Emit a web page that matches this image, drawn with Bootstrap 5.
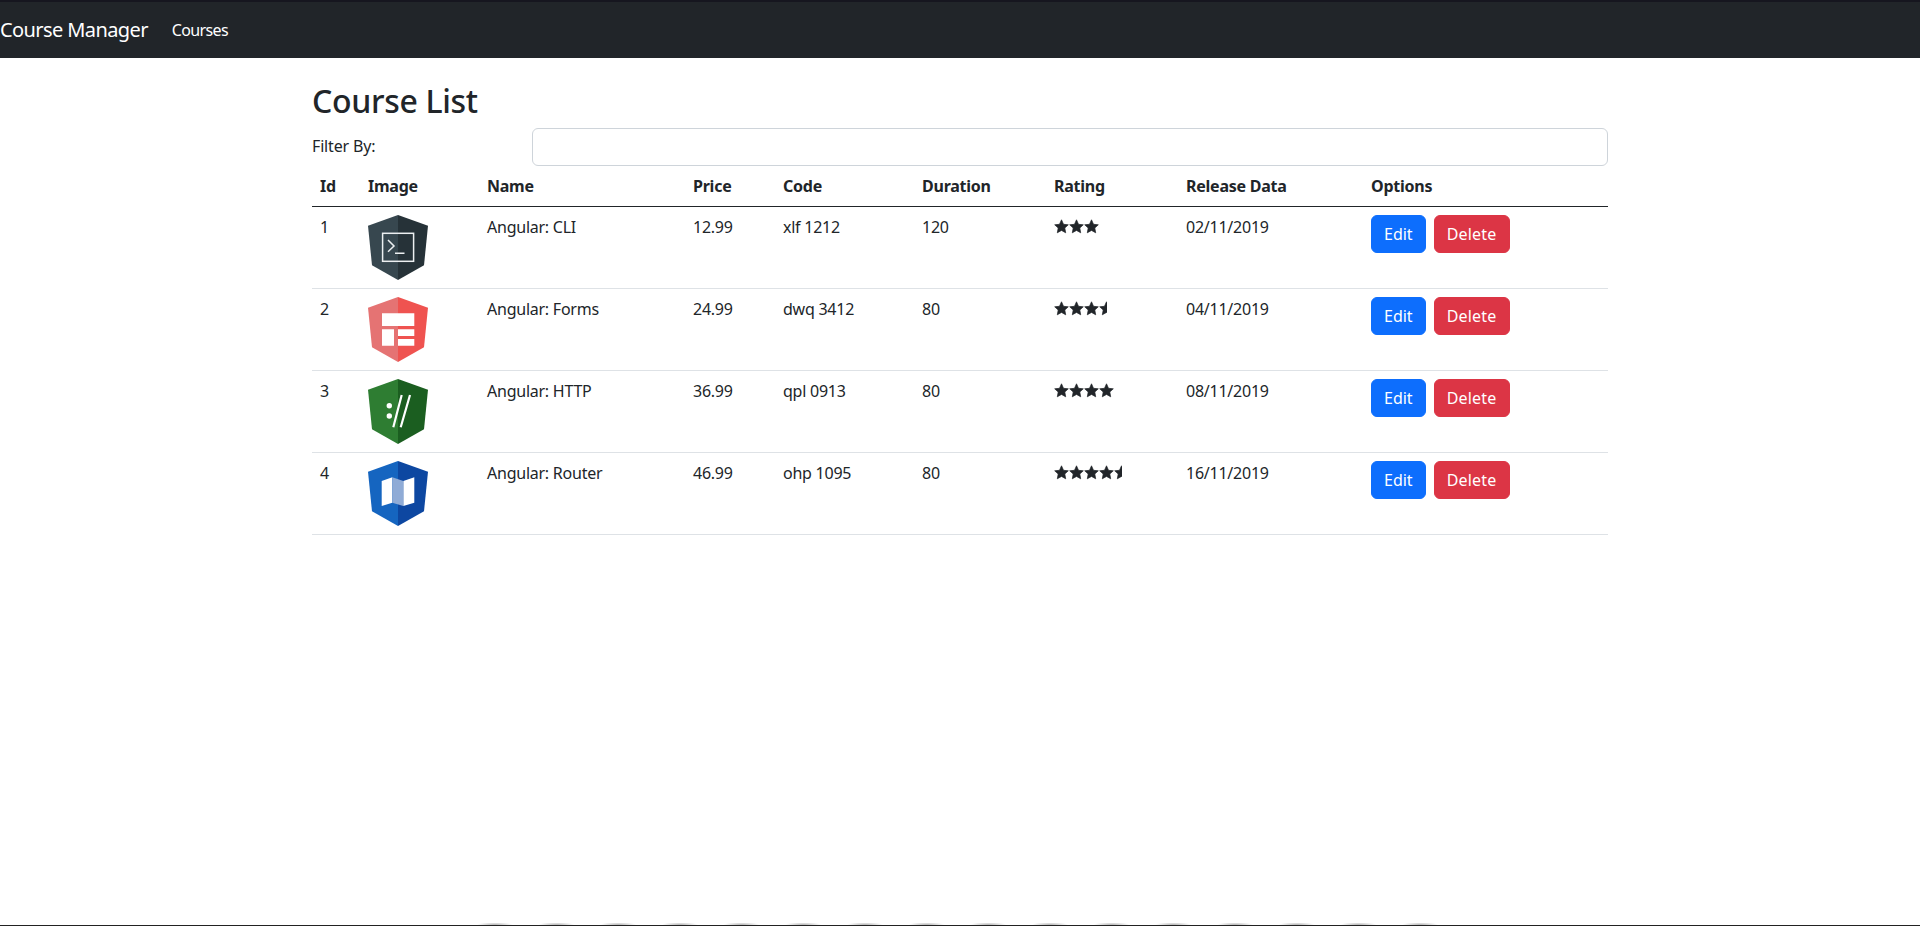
<!DOCTYPE html>
<html lang="en">
<head>
    <meta charset="UTF-8">
    <meta name="viewport" content="width=device-width, initial-scale=1.0">
    <title>Course Manager</title>
    <link href="https://cdn.jsdelivr.net/npm/bootstrap@5.3.0/dist/css/bootstrap.min.css" rel="stylesheet">
    <style>
        body {
            font-family: "Noto Sans", "Open Sans", sans-serif;
        }
        .top-strip {
            height: 2px;
            background: #16161f;
        }
        .app-bar {
            height: 56px;
            padding: 0;
        }
        .app-bar .navbar-brand {
            padding: 0;
            margin-right: 16px;
            font-size: 20px;
            letter-spacing: -0.03em;
        }
        .app-bar .nav-link {
            color: #fff;
            padding: 8px;
            letter-spacing: -0.04em;
        }
        .page-title {
            margin: 24px 0 8px;
            line-height: 38px;
            font-weight: 500;
            letter-spacing: -0.01em;
        }
        .filter-row {
            height: 38px;
        }
        .filter-row .form-control {
            border-color: #ced4da;
        }
        .filter-label {
            letter-spacing: -0.01em;
            padding-bottom: 2px;
        }
        .course-table {
            table-layout: fixed;
            margin: 0;
            letter-spacing: -0.015em;
        }
        .course-table th {
            vertical-align: middle;
        }
        .course-table thead th {
            border-bottom-color: #212529;
        }
        .course-table td {
            height: 82px;
        }
        .course-table .btn {
            letter-spacing: 0;
        }
        .course-table .btn-danger {
            letter-spacing: 0.2px;
        }
        .course-logo {
            display: block;
            width: 60px;
            height: 65px;
        }
        .stars-clip {
            display: block;
            height: 16px;
            margin-top: 4px;
            overflow: hidden;
        }
        .stars-clip svg {
            display: block;
            width: 75px;
            height: 16px;
        }
        .dock-glow {
            height: 2px;
            width: 990px;
            margin-left: 464px;
            background: radial-gradient(ellipse 18px 3px at center bottom, rgba(0, 0, 0, .3), transparent) 0 0 / 61.7px 100%;
        }
        .bottom-strip {
            height: 1px;
            background: #222;
        }
    </style>
</head>
<body class="d-flex flex-column min-vh-100">
    <div class="top-strip"></div>
    <nav class="navbar navbar-dark bg-dark app-bar">
        <div class="d-flex align-items-center">
            <a class="navbar-brand" href="#">Course Manager</a>
            <a class="nav-link" href="#">Courses</a>
        </div>
    </nav>

    <main class="container flex-grow-1">
        <h2 class="page-title">Course List</h2>
        <div class="row align-items-center filter-row">
            <div class="col-2 filter-label">Filter By:</div>
            <div class="col-10"><input type="text" class="form-control"></div>
        </div>
        <table class="table course-table">
            <colgroup id="cols"></colgroup>
            <thead>
                <tr>
                    <th>Id</th>
                    <th>Image</th>
                    <th>Name</th>
                    <th>Price</th>
                    <th>Code</th>
                    <th>Duration</th>
                    <th>Rating</th>
                    <th>Release Data</th>
                    <th>Options</th>
                </tr>
            </thead>
            <tbody id="rows"></tbody>
        </table>
    </main>

    <div class="dock-glow"></div>
    <div class="bottom-strip"></div>

    <script>
        const colWidths = [48, 119, 206, 90, 139, 132, 132, 185, 245];
        const logos = {
            cli: `<polygon points="30,0 0,10.7 4,50.3 30,65" fill="#37474f"/><polygon points="30,0 60,10.7 56,50.3 30,65" fill="#263238"/>
                  <rect x="14.6" y="18.3" width="31" height="28" fill="none" stroke="#eceff1" stroke-width="1.5"/>
                  <path d="M20 25l6 6-6 5.7M27 38.3h9.5" fill="none" stroke="#eceff1" stroke-width="1.5"/>`,
            forms: `<polygon points="30,0 0,10.7 4,50.3 30,65" fill="#e57373"/><polygon points="30,0 60,10.7 56,50.3 30,65" fill="#ef5350"/>
                  <path d="M14 16.3h32.3V29H14zM14 32.3h12v16.4H14zM30 32.3h16.3V39H30zM30 42h16.3v6.7H30z" fill="#fff"/>`,
            http: `<polygon points="30,0 0,10.7 4,50.3 30,65" fill="#2e7d32"/><polygon points="30,0 60,10.7 56,50.3 30,65" fill="#1b5e20"/>
                  <circle cx="21.3" cy="26.7" r="2.7" fill="#fff"/><circle cx="21.3" cy="37" r="2.7" fill="#fff"/>
                  <path d="M33.7 16l-8.4 32.3M42 16l-9.3 32.3" fill="none" stroke="#fff" stroke-width="2.2"/>`,
            router: `<polygon points="30,0 0,10.7 4,50.3 30,65" fill="#1565c0"/><polygon points="30,0 60,10.7 56,50.3 30,65" fill="#0d47a1"/>
                  <path d="M13.7 20l10.6-3.7v25.4L13.7 45zM35.3 20l11-3.7v25.4L35.3 45z" fill="#fff"/>
                  <path d="M24.3 16.3l11 3.7v25l-11-3.3z" fill="#8fabd6"/>`
        };
        const courses = [
            [1, "cli", "Angular: CLI", "12.99", "xlf 1212", 120, 3, "02/11/2019"],
            [2, "forms", "Angular: Forms", "24.99", "dwq 3412", 80, 3.5, "04/11/2019"],
            [3, "http", "Angular: HTTP", "36.99", "qpl 0913", 80, 4, "08/11/2019"],
            [4, "router", "Angular: Router", "46.99", "ohp 1095", 80, 4.5, "16/11/2019"]
        ];
        const star = x => `<polygon transform="translate(${x} 0)" points="7.5,.8 9.5,5.3 14.3,5.8 10.8,9 11.7,13.8 7.5,11.4 3.3,13.8 4.2,9 .7,5.8 5.5,5.3" fill="#212529" stroke="#212529" stroke-width=".7" stroke-linejoin="round"/>`;
        const stars = [0, 15, 30, 45, 60].map(star).join("");

        document.getElementById("cols").innerHTML = colWidths.map(w => `<col style="width:${w}px">`).join("");
        document.getElementById("rows").innerHTML = courses.map(c => `
            <tr>
                <td>${c[0]}</td>
                <td><svg class="course-logo" viewBox="0 0 60 65">${logos[c[1]]}</svg></td>
                <td>${c[2]}</td>
                <td>${c[3]}</td>
                <td>${c[4]}</td>
                <td>${c[5]}</td>
                <td><span class="stars-clip" style="width:${c[6] * 15}px"><svg viewBox="0 0 75 16">${stars}</svg></span></td>
                <td>${c[7]}</td>
                <td>
                    <div class="d-flex gap-2">
                        <button class="btn btn-primary">Edit</button>
                        <button class="btn btn-danger">Delete</button>
                    </div>
                </td>
            </tr>`).join("");
    </script>
    <script src="https://cdn.jsdelivr.net/npm/bootstrap@5.3.0/dist/js/bootstrap.bundle.min.js"></script>
</body>
</html>
